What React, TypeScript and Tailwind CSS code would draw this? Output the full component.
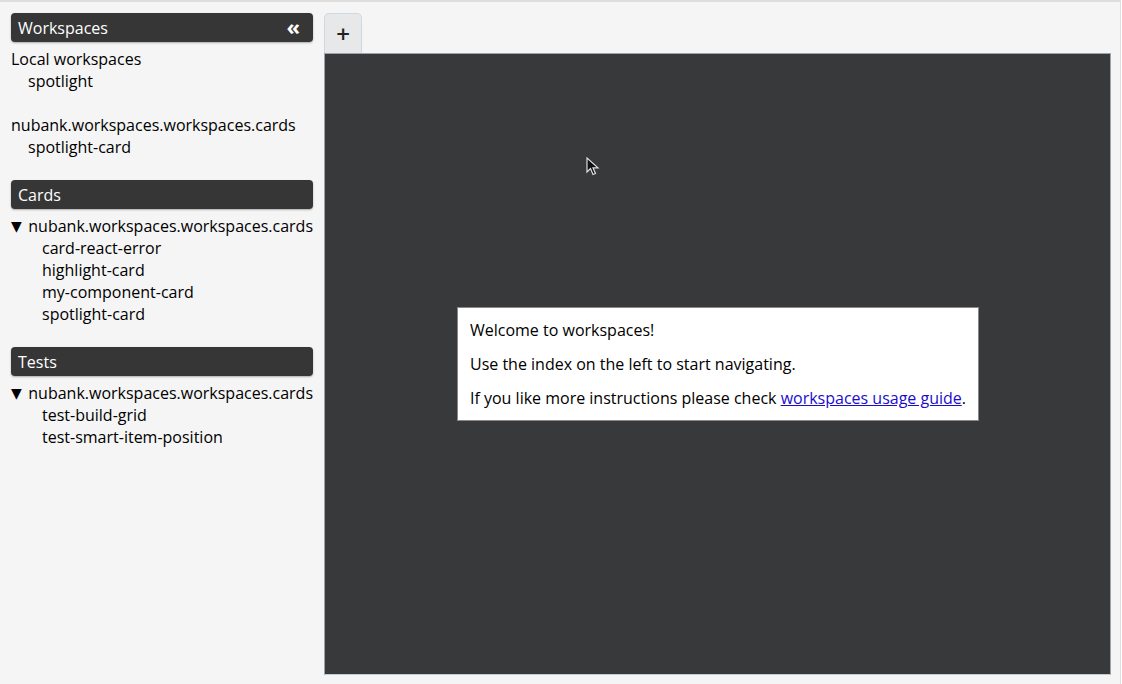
const font = { fontFamily: '"Open Sans", "Liberation Sans", sans-serif' }

const Header = ({ title, collapse }: { title: string; collapse?: boolean }) => (
  <div className="flex items-center justify-between h-[29px] rounded-[4px] bg-[#363636] text-white text-[16px] pl-[7px] pr-[13px] shadow-[0_1px_2px_rgba(0,0,0,0.3)]">
    <span>{title}</span>
    {collapse && <span className="text-[22px] font-bold leading-none -mt-[3px]">«</span>}
  </div>
)

const Tree = ({ ns, items }: { ns: string; items: string[] }) => (
  <div className="text-[16px] leading-[22px] text-black mt-[6px]">
    <div className="flex">
      <span className="w-[18px] text-[14px] font-['DejaVu_Sans',sans-serif]">▼</span>
      <span>{ns}</span>
    </div>
    {items.map((i) => (
      <div key={i} className="pl-[31px]">
        {i}
      </div>
    ))}
  </div>
)

const Cursor = () => (
  <svg className="absolute left-[261px] top-[103px]" width="14" height="20" viewBox="0 0 14 20">
    <path d="M1 1 L1 15 L4.5 11.5 L7 17.5 L9.5 16.5 L7 10.8 L12 10.8 Z" fill="#111" stroke="#ddd" strokeWidth="1.2" />
  </svg>
)

export default function App() {
  return (
    <div style={font} className="w-[1121px] h-[684px] bg-[#f5f5f5] border-t-2 border-r border-[#dedede] flex overflow-hidden">
      <aside className="w-[325px] shrink-0 pl-[11px] pr-[12px] pt-[11px]">
        <Header title="Workspaces" collapse />
        <div className="text-[16px] leading-[22px] text-black mt-[6px]">
          <div>Local workspaces</div>
          <div className="pl-[17px]">spotlight</div>
          <div className="mt-[22px]">nubank.workspaces.workspaces.cards</div>
          <div className="pl-[17px]">spotlight-card</div>
        </div>
        <div className="mt-[22px]">
          <Header title="Cards" />
          <Tree ns="nubank.workspaces.workspaces.cards" items={["card-react-error", "highlight-card", "my-component-card", "spotlight-card"]} />
        </div>
        <div className="mt-[22px]">
          <Header title="Tests" />
          <Tree ns="nubank.workspaces.workspaces.cards" items={["test-build-grid", "test-smart-item-position"]} />
        </div>
      </aside>
      <main className="flex-1 flex flex-col pt-[11px] pr-[9px] pb-[9px] -ml-px">
        <div className="flex">
          <button className="w-[38px] h-[40px] rounded-t-[5px] border border-b-0 border-[#cfd8e0] bg-[#e7e8e9] text-[24px] font-semibold text-[#222] leading-none flex items-center justify-center">
            +
          </button>
        </div>
        <div className="relative flex-1 bg-[#38393b] border border-[#9aa4ad] border-b-[#c0ccd4] flex items-center justify-center">
          <Cursor />
          <div className="bg-white border border-[#888] whitespace-nowrap px-[12px] pt-[11px] pb-[11px] text-[16px] leading-[22px] text-black ml-px">
            <p>Welcome to workspaces!</p>
            <p className="mt-[12px]">Use the index on the left to start navigating.</p>
            <p className="mt-[12px]">
              If you like more instructions please check{" "}
              <a href="#" className="text-[#1a0dcc] underline">
                workspaces usage guide
              </a>
              .
            </p>
          </div>
        </div>
      </main>
    </div>
  )
}
